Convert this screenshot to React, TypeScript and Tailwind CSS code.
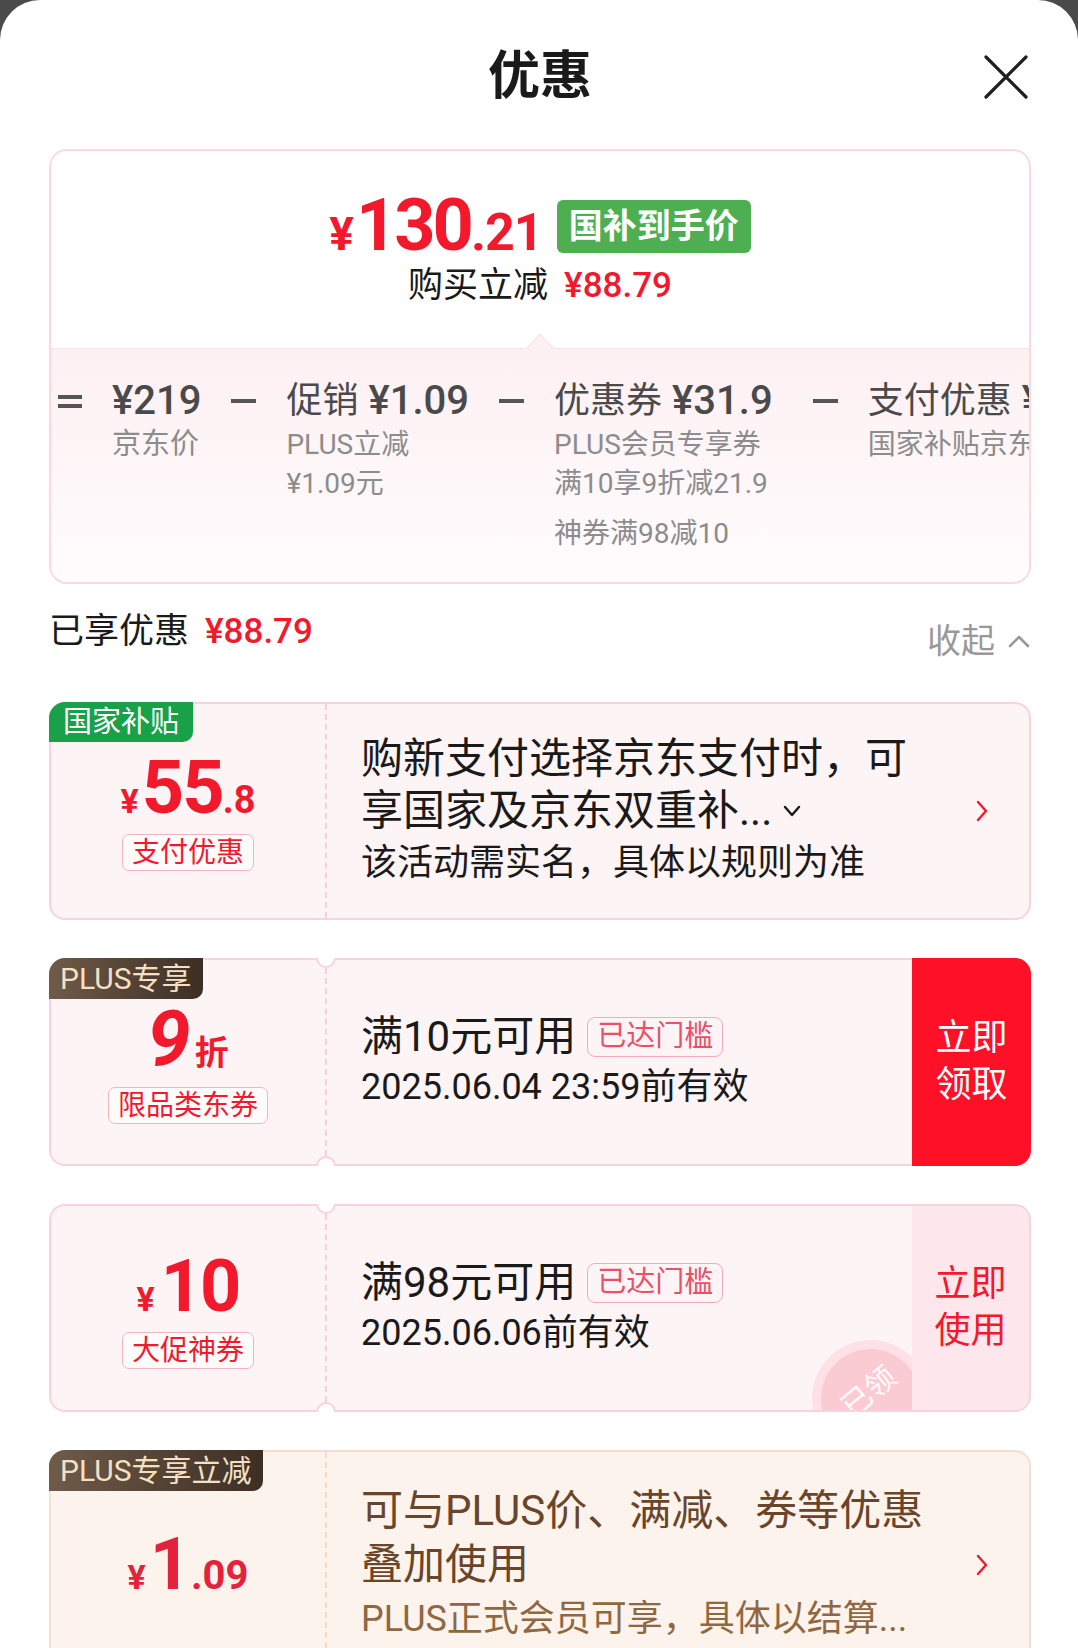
import React from "react";

const red = "text-[#f3192d]";

const Bar = () => (
  <div className="h-[48px] flex items-center">
    <div className="w-[25px] h-[4px] bg-[#555]" />
  </div>
);

const Equals = () => (
  <div className="h-[48px] flex flex-col justify-center gap-[5px]">
    <div className="w-[24px] h-[4px] bg-[#555]" />
    <div className="w-[24px] h-[4px] bg-[#555]" />
  </div>
);

const ChevronRight = ({ color = "#f3192d" }: { color?: string }) => (
  <svg width="14" height="24" viewBox="0 0 14 24" fill="none">
    <path d="M3 3l8 9-8 9" stroke={color} strokeWidth="2.4" strokeLinecap="round" strokeLinejoin="round" />
  </svg>
);

const Notches = () => (
  <>
    <div className="absolute -top-[2px] left-[265px] w-[20px] h-[10px] overflow-hidden">
      <div className="w-[20px] h-[20px] -mt-[10px] rounded-full bg-white border-2 border-[#f9d3dc]" />
    </div>
    <div className="absolute -bottom-[2px] left-[265px] w-[20px] h-[10px] overflow-hidden">
      <div className="w-[20px] h-[20px] rounded-full bg-white border-2 border-[#f9d3dc]" />
    </div>
  </>
);

const Pill = ({ children, className = "" }: { children: React.ReactNode; className?: string }) => (
  <div
    className={
      "h-[37px] px-[9px] rounded-[7px] border-[1.5px] border-[#f6b3c0] bg-white/60 text-[28px] leading-none flex items-center " +
      className
    }
  >
    {children}
  </div>
);

const Reached = () => (
  <div className="ml-[11px] h-[40px] px-[9px] rounded-[8px] border-[1.5px] border-[#f7a9b9] text-[#ea5068] text-[29px] leading-none flex items-center">
    已达门槛
  </div>
);

const PlusTag = ({ children }: { children: React.ReactNode }) => (
  <div className="absolute -top-[2px] -left-[2px] h-[41px] px-[11px] rounded-tl-[16px] rounded-br-[10px] bg-gradient-to-r from-[#6f5b49] to-[#3d2f25] text-[#f6e0c4] text-[30px] leading-none flex items-center">
    {children}
  </div>
);

export default function App() {
  return (
    <div className="w-[1078px] h-[1648px] overflow-hidden bg-[#4a4a4a] font-['Roboto','Noto_Sans_CJK_SC',sans-serif]">
      <div className="bg-white rounded-t-[40px] h-full pl-[49px] pr-[47px]">
        {/* header */}
        <div className="grid grid-cols-[1fr_auto_1fr] items-center h-[149px] pt-[4px]">
          <div />
          <div className="text-[52px] font-bold text-[#1a1a1a] leading-none">优惠</div>
          <div className="flex justify-end pr-[2px]">
            <svg width="46" height="46" viewBox="0 0 46 46" fill="none">
              <path d="M3 3l40 40M43 3L3 43" stroke="#1f1f1f" strokeWidth="3.2" strokeLinecap="round" />
            </svg>
          </div>
        </div>

        {/* summary card */}
        <div className="rounded-[18px] border-2 border-[#fcd9e1] overflow-hidden h-[435px] flex flex-col">
          <div className="h-[197px] shrink-0 flex flex-col items-center pt-[39px] bg-white">
            <div className="flex items-center h-[72px]">
              <div className={"flex items-baseline font-bold leading-none " + red}>
                <span className="text-[46px]">¥</span>
                <span className="text-[72px] tracking-[-3px] ml-[2px]">130</span>
                <span className="text-[52px] tracking-[-1px]">.21</span>
              </div>
              <div className="ml-[14px] h-[53px] px-[12px] rounded-[6px] bg-[#4daf51] text-white text-[34px] font-bold leading-none flex items-center">
                国补到手价
              </div>
            </div>
            <div className="mt-[2px] h-[44px] flex items-center">
              <span className="text-[35px] text-[#1a1a1a]">购买立减</span>
              <span className={"ml-[16px] text-[35px] font-medium " + red}>¥88.79</span>
            </div>
          </div>

          <div className="relative flex-1 bg-gradient-to-b from-[#fdf0f3] to-[#fffcfd] border-t border-[#fbe2e8]">
            <div className="absolute -top-[11px] left-[479px] w-[20px] h-[20px] rotate-45 bg-[#fdf0f3] border-l border-t border-[#fbe2e8]" />
            <div className="relative flex items-start gap-[30px] pl-[7px] pt-[28px] whitespace-nowrap text-[#4a4a4a]">
              <Equals />
              <div className="flex flex-col">
                <div className="h-[48px] flex items-center text-[40px] font-medium">¥219</div>
                <div className="text-[29px] leading-[39px] text-[#8c8c8c]">京东价</div>
              </div>
              <Bar />
              <div className="flex flex-col">
                <div className="h-[48px] flex items-center">
                  <span className="text-[36px]">促销</span>
                  <span className="ml-[10px] text-[40px] font-medium">¥1.09</span>
                </div>
                <div className="text-[28px] leading-[39px] text-[#8c8c8c]">PLUS立减</div>
                <div className="text-[28px] leading-[39px] text-[#8c8c8c]">¥1.09元</div>
              </div>
              <Bar />
              <div className="flex flex-col">
                <div className="h-[48px] flex items-center">
                  <span className="text-[36px]">优惠券</span>
                  <span className="ml-[10px] text-[40px] font-medium">¥31.9</span>
                </div>
                <div className="text-[28px] leading-[39px] text-[#8c8c8c]">PLUS会员专享券</div>
                <div className="text-[28px] leading-[39px] text-[#8c8c8c]">满10享9折减21.9</div>
                <div className="mt-[11px] text-[28px] leading-[39px] text-[#8c8c8c]">神券满98减10</div>
              </div>
              <div className="ml-[10px]">
                <Bar />
              </div>
              <div className="flex flex-col">
                <div className="h-[48px] flex items-center">
                  <span className="text-[36px]">支付优惠</span>
                  <span className="ml-[10px] text-[40px] font-medium">¥55.8</span>
                </div>
                <div className="text-[28px] leading-[39px] text-[#8c8c8c]">国家补贴京东支付</div>
              </div>
            </div>
          </div>
        </div>

        {/* enjoyed row */}
        <div className="mt-[24px] flex justify-between items-start">
          <div className="h-[48px] flex items-center">
            <span className="text-[35px] text-[#1a1a1a]">已享优惠</span>
            <span className={"ml-[16px] text-[35px] font-medium " + red}>¥88.79</span>
          </div>
          <div className="mt-[9px] h-[48px] flex items-center text-[34px] text-[#999]">
            收起
            <svg className="ml-[12px]" width="24" height="14" viewBox="0 0 24 14" fill="none">
              <path d="M3 12l9-9 9 9" stroke="#999" strokeWidth="2.6" strokeLinecap="round" strokeLinejoin="round" />
            </svg>
          </div>
        </div>

        {/* coupon 1 */}
        <div className="relative mt-[37px] h-[218px] flex rounded-[16px] border-2 border-[#f9d3dc] bg-[#fdf4f6]">
          <div className="absolute -top-[2px] -left-[2px] h-[40px] px-[14px] rounded-tl-[16px] rounded-br-[10px] bg-[#19a149] text-white text-[29px] leading-none flex items-center">
            国家补贴
          </div>
          <div className="w-[274px] shrink-0 flex flex-col items-center justify-center gap-[13px]">
            <div className={"h-[70px] flex items-baseline font-bold leading-none " + red}>
              <span className="text-[34px]">¥</span>
              <span className="text-[74px] tracking-[-2px] ml-[3px]">55</span>
              <span className="text-[38px]">.8</span>
            </div>
            <Pill className={red}>支付优惠</Pill>
          </div>
          <div className="border-l-2 border-dashed border-[#f6d0d8]" />
          <div className="flex-1 flex items-center pl-[34px] pr-[40px] whitespace-nowrap text-[#1a1a1a]">
            <div className="flex-1 flex flex-col">
              <div className="text-[42px] leading-[52px]">购新支付选择京东支付时，可</div>
              <div className="text-[42px] leading-[52px] flex items-center">
                享国家及京东双重补...
                <svg className="ml-[10px]" width="20" height="14" viewBox="0 0 20 14" fill="none">
                  <path d="M3 3l7 8 7-8" stroke="#1a1a1a" strokeWidth="2.4" strokeLinecap="round" strokeLinejoin="round" />
                </svg>
              </div>
              <div className="text-[36px] leading-[52px]">该活动需实名，具体以规则为准</div>
            </div>
            <ChevronRight />
          </div>
        </div>

        {/* coupon 2 */}
        <div className="relative mt-[38px] h-[208px] flex rounded-[16px] border-2 border-[#f9d3dc] bg-[#fdf4f6]">
          <PlusTag>PLUS专享</PlusTag>
          <Notches />
          <div className="w-[274px] shrink-0 flex flex-col items-center justify-center gap-[21px]">
            <div className={"h-[66px] flex items-baseline font-bold leading-none " + red}>
              <span className="text-[78px] italic">9</span>
              <span className="ml-[4px] text-[34px]">折</span>
            </div>
            <Pill className={red}>限品类东券</Pill>
          </div>
          <div className="my-[8px] border-l-2 border-dashed border-[#f6d0d8]" />
          <div className="flex-1 flex flex-col justify-center pl-[34px] whitespace-nowrap text-[#1a1a1a]">
            <div className="flex items-center h-[51px]">
              <span className="text-[42px]">满10元可用</span>
              <Reached />
            </div>
            <div className="text-[36px] leading-[51px]">2025.06.04 23:59前有效</div>
          </div>
          <div className="-my-[2px] -mr-[2px] w-[119px] shrink-0 rounded-r-[16px] bg-[#fe1027] text-white text-[36px] leading-[47px] flex flex-col items-center justify-center">
            <span>立即</span>
            <span>领取</span>
          </div>
        </div>

        {/* coupon 3 */}
        <div className="relative mt-[38px] h-[208px] flex rounded-[16px] border-2 border-[#f9d3dc] bg-[#fdf4f6]">
          <Notches />
          <div className="w-[274px] shrink-0 flex flex-col items-center justify-center gap-[15px] pt-[4px]">
            <div className={"h-[66px] flex items-baseline font-bold leading-none " + red}>
              <span className="text-[34px]">¥</span>
              <span className="ml-[6px] text-[72px] tracking-[-2px]">10</span>
            </div>
            <Pill className={red}>大促神券</Pill>
          </div>
          <div className="my-[8px] border-l-2 border-dashed border-[#f6d0d8]" />
          <div className="relative overflow-hidden flex-1 flex flex-col justify-center pl-[34px] whitespace-nowrap text-[#1a1a1a]">
            <div className="flex items-center h-[51px]">
              <span className="text-[42px]">满98元可用</span>
              <Reached />
            </div>
            <div className="text-[36px] leading-[51px]">2025.06.06前有效</div>
            <div className="absolute left-[485px] top-[134px] w-[117px] h-[117px] rounded-full bg-[#fde1e7] p-[9px]">
              <div className="w-full h-full rounded-full bg-[#fbcbd4] flex items-center justify-center">
                <span className="-rotate-[40deg] -mt-[14px] -ml-[4px] text-[30px] text-white/90 leading-none">已领</span>
              </div>
            </div>
          </div>
          <div className="w-[117px] shrink-0 rounded-r-[14px] bg-[#fde6ec] text-[36px] leading-[47px] flex flex-col items-center justify-center text-[#f3192d]">
            <span>立即</span>
            <span>使用</span>
          </div>
        </div>

        {/* coupon 4 */}
        <div className="relative mt-[38px] h-[230px] flex rounded-[16px] border-2 border-[#f3dfcf] bg-[#fbf3ec]">
          <PlusTag>PLUS专享立减</PlusTag>
          <div className="w-[274px] shrink-0 flex items-center justify-center">
            <div className="flex items-baseline font-bold leading-none text-[#e4223c]">
              <span className="text-[34px]">¥</span>
              <span className="ml-[4px] text-[72px]">1</span>
              <span className="text-[40px]">.09</span>
            </div>
          </div>
          <div className="border-l-2 border-dashed border-[#efdccd]" />
          <div className="flex-1 flex items-center pl-[34px] pr-[40px] whitespace-nowrap">
            <div className="flex-1 flex flex-col">
              <div className="text-[42px] leading-[54px] text-[#6b4529]">可与PLUS价、满减、券等优惠</div>
              <div className="text-[42px] leading-[54px] text-[#6b4529]">叠加使用</div>
              <div className="text-[36px] leading-[54px] text-[#8f6841]">PLUS正式会员可享，具体以结算...</div>
            </div>
            <ChevronRight />
          </div>
        </div>
      </div>
    </div>
  );
}
